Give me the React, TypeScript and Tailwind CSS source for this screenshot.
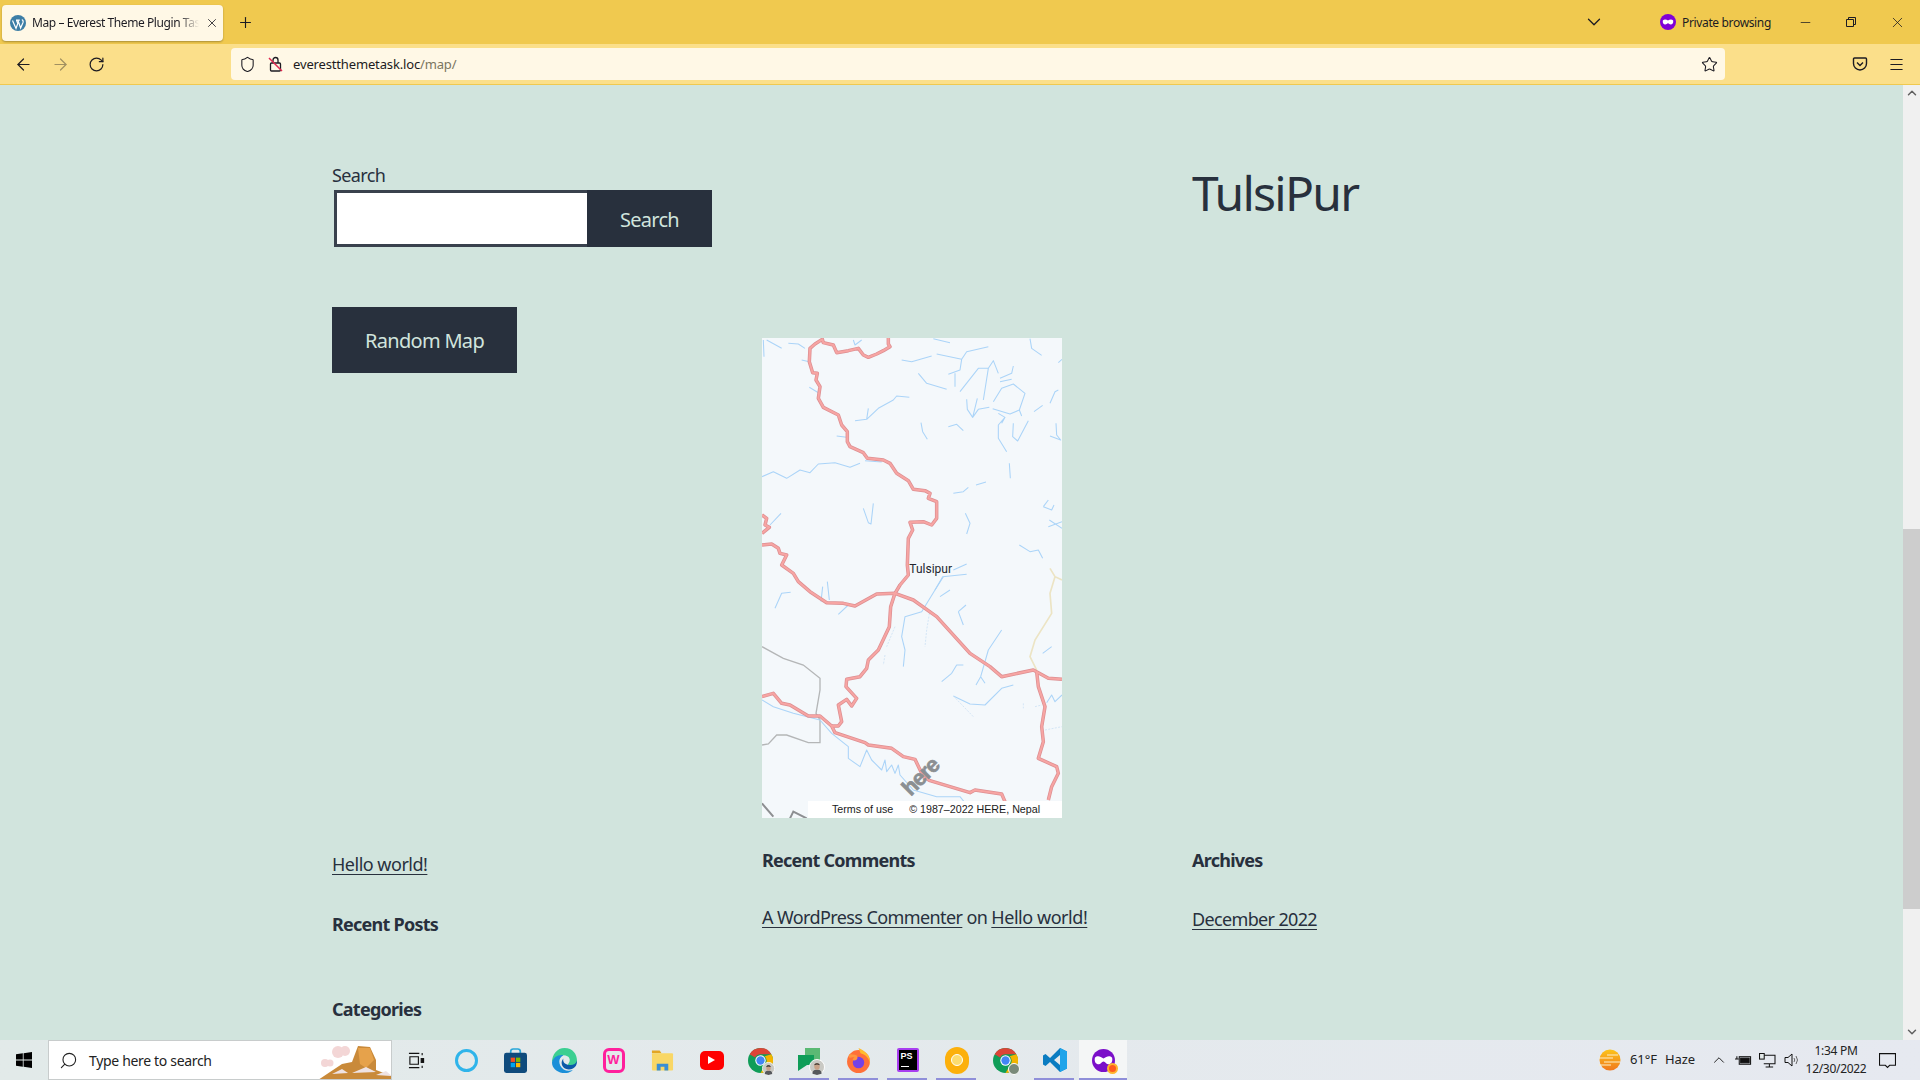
import { ArrowLeft, ArrowRight, ChevronDown, ChevronUp, Menu, Minus, Plus, RotateCw, Search, Shield, Star, X } from 'lucide-react';

const ui = 'font-["Noto_Sans",sans-serif]';

const roads = [
  'M445 24 445 42 450 50 430 62 410 72 385 82 370 75 355 55 325 62 290 68 280 45 250 38 247 28 225 42 210 55 208 95 218 128 232 130 228 150 240 170 235 205 250 232 295 255 305 285 322 305 322 335 330 350 370 368 382 385 430 390 450 400 470 430 505 452 520 478 555 482 570 490 565 505 590 515 590 565 575 585 550 575 510 577 518 600 505 625 502 705 505 735 480 765 465 790 452 830 448 890 415 960 385 990 380 1015 360 1040 320 1048 318 1070 350 1105 335 1128 320 1108 295 1125 305 1175 295 1188 275 1188',
  'M66 645 95 642 115 655 120 670 140 675 125 705 160 730 175 755 210 785 260 818 310 820 345 828 410 792 465 790 520 810 590 860 690 970 750 1010 785 1040 880 1020 925 1045 966 1048',
  'M66 1100 100 1090 125 1120 150 1125 205 1158 240 1158 275 1188 285 1208 375 1238 385 1245 455 1255 490 1280 525 1288 550 1340 570 1352 690 1388 705 1380 785 1392 795 1415',
  'M890 1025 895 1070 915 1130 905 1190 910 1235 895 1285 950 1310 955 1330 935 1370 925 1410',
  'M66 555 80 565 75 585 88 592 66 610',
];

const rivers = [
  'M70 30 72 80M80 30 125 55M145 40 175 42 195 55M340 30 345 45 365 30M580 26 630 38',
  'M485 90 515 95 575 78M590 72 665 88 680 65 745 50M665 88 660 120 625 133M645 130 645 170M535 130 560 160 620 178',
  'M660 185 715 115 745 115 730 210M745 115 760 92 775 130M780 145 815 130 820 108M780 155 815 148M760 215 785 175 820 162 855 190 838 240M680 208 682 238 698 262 712 205M698 262 715 238 748 232M758 236 810 252 838 240 845 258',
  'M870 26 875 55 905 76M955 98 966 88M930 220 945 185 955 180M882 245 908 226M775 250 795 262 775 285 775 325 800 365M795 262 785 280M820 280 818 320 833 333 865 272M948 280 950 315 962 330 930 318',
  'M345 272 380 268 385 235M380 268 415 235 460 210 470 198 508 202M543 278 548 305 562 328M625 290 650 283 670 302M290 318 320 322',
  'M66 440 100 425 140 445 180 420 210 428 235 402 285 398 330 412 360 400M375 392 425 396M808 400 811 445M640 490 670 485 685 472M708 465 738 456',
  'M370 535 385 578 393 582 400 520M676 550 690 580 680 612M910 530 925 510M910 530 935 540 942 525M928 570 966 595M925 590 966 575M838 645 870 665 895 660 908 685',
  'M90 585 123 550M585 780 608 740 680 733M640 720 680 702M208 172 235 188M185 90 208 95',
  'M105 835 125 790 152 787M248 770 243 815M262 755 268 810M295 853 325 825 345 828M610 740 585 780 545 845 495 860 485 920 495 960 490 1010M600 800 630 780M655 845 678 825M655 845 670 885',
  'M745 960 785 900M745 960 722 1040 708 1065M722 1040 735 1060M605 1055 635 1030 650 1005 670 1005M908 970 935 950',
  'M640 1098 690 1122 735 1125 785 1075 820 1065M920 1118 935 1095 945 1115 966 1095',
  'M66 1110 100 1130 160 1150 240 1170 275 1210 325 1250 325 1285 360 1310 380 1260 395 1290 425 1320 435 1290 440 1325 455 1305 465 1330 475 1305 480 1335 520 1380 590 1400 660 1400 680 1425',
];

const faintRivers = 'M465 890 440 950M435 975 430 1005M570 840 560 900 555 950M640 1098 700 1160M850 1120 850 1135M885 1130 905 1125M915 1200 966 1190';

const MapView = () => (
  <div className="relative w-[300px] h-[480px] mt-[253px] bg-[#f4f8fb] overflow-hidden">
    <svg viewBox="66 24 900 1440" className="w-full h-full block">
      <path d="M66 950 130 985 190 1005 240 1045 240 1080 228 1150 240 1170 240 1238 205 1238 140 1215 110 1215 85 1242 66 1245" fill="none" stroke="#b4b6b7" strokeWidth="4" />
      <path d="M66 1420 100 1460M150 1465 160 1445 200 1465" fill="none" stroke="#8d8f92" strokeWidth="6" />
      <path d="M930 715 945 740 966 750M945 740 930 790 935 850 885 930 870 980 890 1020" fill="none" stroke="#ece4c4" strokeWidth="5" />
      {rivers.map((d) => (
        <path key={d} d={d} fill="none" stroke="#abd4f8" strokeWidth="3.2" strokeLinejoin="round" />
      ))}
      <path d={faintRivers} fill="none" stroke="#d4e6f6" strokeWidth="3" strokeDasharray="6 4" />
      {roads.map((d) => (
        <path key={d} d={d} fill="none" stroke="#dd8f92" strokeWidth="10.5" strokeLinejoin="round" />
      ))}
      {roads.map((d) => (
        <path key={d + 'i'} d={d} fill="none" stroke="#f7a5a3" strokeWidth="6" strokeLinejoin="round" />
      ))}
      <text x="508" y="729" fontSize="36" fill="#23262f" fontFamily="Roboto, sans-serif">Tulsipur</text>
      <text x="0" y="0" transform="translate(512 1400) rotate(-45)" fontSize="66" fontWeight="700" fill="#8b8f92" fontFamily="'Liberation Sans', sans-serif" stroke="#8b8f92" strokeWidth="2" letterSpacing="-3">here</text>
    </svg>
    <div className="absolute left-[46px] right-0 bottom-0 h-[17px] bg-white flex items-center pl-[24px] gap-[16px] text-[10.7px] text-[#1a1a1a] font-['Liberation_Sans',sans-serif]">
      <span>Terms of use</span>
      <span>© 1987–2022 HERE, Nepal</span>
    </div>
  </div>
);

const Chrome = () => (
  <div className={`${ui} text-[#1c1b22]`}>
    <div className="h-[44px] bg-[#f0c94f] flex items-center">
      <div className="ml-[2px] mt-[1px] w-[221px] h-[36px] bg-[#fff8e6] rounded-[4px] shadow-[0_1px_2px_rgba(0,0,0,0.3)] flex items-center pl-[8px] pr-[8px] gap-[6px]">
        <svg viewBox="0 0 16 16" className="w-[16px] h-[16px] shrink-0">
          <circle cx="8" cy="8" r="8" fill="#3d7ea6" />
          <path d="M2.5 5.5 6 13.5 7.8 8.5 6.5 5.2M6 5.2H9.8M8 5.4 10.6 13 13 7.5C13.5 6 12.7 4.8 11.8 5" fill="none" stroke="#fff" strokeWidth="1.2" />
        </svg>
        <span className="w-[167px] text-[12px] tracking-[-0.42px] whitespace-nowrap [mask-image:linear-gradient(to_right,black_88%,transparent)]">Map – Everest Theme Plugin Tas</span>
        <X size={14} strokeWidth={1.4} className="shrink-0" />
      </div>
      <Plus size={17} strokeWidth={1.6} className="ml-[14px]" />
      <div className="flex-1" />
      <ChevronDown size={22} strokeWidth={1.4} className="mr-[55px]" />
      <svg viewBox="0 0 16 16" className="w-[16px] h-[16px] mr-[6px]">
        <circle cx="8" cy="8" r="8" fill="#8000d7" />
        <path d="M2.8 6.5C4.5 5 6.5 5.6 8 6.6 9.5 5.6 11.5 5 13.2 6.5 13.6 9 12.3 10.5 10.8 10.5 9.5 10.5 9 9.2 8 9.2S6.5 10.5 5.2 10.5C3.7 10.5 2.4 9 2.8 6.5Z" fill="#fff" />
      </svg>
      <span className="w-[100px] pt-[2px] text-[12px] tracking-[-0.35px] whitespace-nowrap">Private browsing</span>
      <div className="w-[46px] flex justify-center"><Minus size={15} strokeWidth={1.2} /></div>
      <div className="w-[46px] flex justify-center">
        <svg viewBox="0 0 10 10" className="w-[10px] h-[10px]" fill="none" stroke="#1c1b22">
          <path d="M.5 2.5h7v7h-7zM2.5 2.5v-2h7v7h-2" />
        </svg>
      </div>
      <div className="w-[46px] flex justify-center"><X size={17} strokeWidth={1.1} /></div>
    </div>
    <div className="h-[41px] bg-[#fbdf8a] border-b border-[#f0c94f] flex items-start pt-[4px]">
      <div className="w-[231px] h-[32px] flex items-center pl-[14px] gap-[18px]">
        <ArrowLeft size={19} strokeWidth={1.5} />
        <ArrowRight size={19} strokeWidth={1.5} className="opacity-40" />
        <RotateCw size={17} strokeWidth={1.7} />
      </div>
      <div className="w-[1494px] h-[32px] bg-[#fff8e6] rounded-[4px] flex items-center pl-[8px] pr-[7px]">
        <Shield size={17} strokeWidth={1.5} />
        <svg viewBox="0 0 16 16" className="w-[16px] h-[16px] ml-[12px]" fill="none">
          <rect x="2.5" y="7" width="10" height="8" rx="1" stroke="#1c1b22" strokeWidth="1.3" />
          <path d="M5 7V4a2.5 2.5 0 0 1 5 0v3" stroke="#1c1b22" strokeWidth="1.3" />
          <path d="M1 2 14 15" stroke="#e22850" strokeWidth="1.5" />
        </svg>
        <span className="ml-[9px] pt-[2px] text-[13px] tracking-[-0.15px] flex-1">everestthemetask.loc<span className="text-[#7a755f]">/map/</span></span>
        <Star size={17} strokeWidth={1.5} />
      </div>
      <div className="flex-1 h-[32px] flex items-center justify-end pr-[15px] gap-[20px]">
        <svg viewBox="0 0 16 16" className="w-[16px] h-[16px]" fill="none" stroke="#1c1b22" strokeWidth="1.4">
          <path d="M2.5 2h11a1 1 0 0 1 1 1v4.5a6.5 6.5 0 0 1-13 0V3a1 1 0 0 1 1-1Z" />
          <path d="M5 6.5 8 9.5 11 6.5" />
        </svg>
        <Menu size={17} strokeWidth={1.5} />
      </div>
    </div>
  </div>
);

const Page = () => (
  <div className="flex-1 min-w-0 h-[955px] overflow-hidden pl-[332px] text-[#28303d] font-['Noto_Sans',sans-serif]">
    <div className="grid grid-cols-[430px_430px_1fr]">
      <div className="pt-[76px]">
        <label className="block text-[18px] leading-[29px] tracking-[-0.6px]">Search</label>
        <div className="flex ml-[2px] h-[57px]">
          <input className="w-[253px] h-full bg-white border-[3px] border-r-0 border-[#39414d] outline-none" />
          <button className="w-[125px] h-full bg-[#28303d] text-[#d1e4dd] text-[20px] pt-[2px] tracking-[-0.75px]">Search</button>
        </div>
        <button className="mt-[60px] w-[185px] h-[66px] pt-[2px] bg-[#28303d] text-[#d1e4dd] text-[20px] tracking-[-0.7px]">Random Map</button>
      </div>
      <div>
        <MapView />
      </div>
      <h1 className="pt-[72px] text-[48px] leading-[72px] font-normal tracking-[-1.75px]">TulsiPur</h1>
    </div>
    <div className="grid grid-cols-[430px_430px_1fr] mt-[29px] text-[18px] tracking-[-0.6px]">
      <div className="pt-[3px]">
        <a className="underline underline-offset-[3px] leading-[26px] block mt-[1px] tracking-[-0.5px]">Hello world!</a>
        <h2 className="mt-[34px] font-bold leading-[26px] tracking-[-0.75px]">Recent Posts</h2>
        <h2 className="mt-[59px] font-bold leading-[26px] tracking-[-0.75px]">Categories</h2>
      </div>
      <div>
        <h2 className="font-bold leading-[26px] tracking-[-0.75px]">Recent Comments</h2>
        <p className="mt-[31px] leading-[26px]"><a className="underline underline-offset-[3px]">A WordPress Commenter</a> on <a className="underline underline-offset-[3px] tracking-[-0.45px]">Hello world!</a></p>
      </div>
      <div>
        <h2 className="font-bold leading-[26px] tracking-[-0.75px]">Archives</h2>
        <a className="mt-[33px] block underline underline-offset-[3px] leading-[26px] tracking-[-0.65px]">December 2022</a>
      </div>
    </div>
  </div>
);

const Scrollbar = () => (
  <div className="w-[17px] h-[955px] bg-[#f0f0f0] flex flex-col items-center">
    <ChevronUp size={14} strokeWidth={2.5} className="mt-[1px] text-[#606060]" />
    <div className="w-full h-[380px] mt-[429px] bg-[#cdcdcd]" />
    <div className="flex-1" />
    <ChevronDown size={14} strokeWidth={2.5} className="mb-[1px] text-[#606060]" />
  </div>
);

const Slot = ({ children, line, active }: { children: React.ReactNode; line?: boolean; active?: boolean }) => (
  <div className={`relative h-[40px] flex items-center justify-center ${active ? 'w-[48px] bg-[#f4f6f6]' : 'w-[49px]'}`}>
    {children}
    {line && <div className={`absolute bottom-0 h-[2px] bg-[#8f8fd9] ${active ? 'left-0 right-0' : 'left-[4px] right-[5px]'}`} />}
  </div>
);

const ChromeLogo = ({ colors = ['#db4437', '#0f9d58', '#f4b400'] }: { colors?: string[] }) => (
  <svg viewBox="0 0 24 24" className="w-[25px] h-[25px]">
    <circle cx="12" cy="12" r="12" fill={colors[1]} />
    <path d="M12 0A12 12 0 0 1 22.4 6H12A6 6 0 0 0 6.8 9L1.6 6A12 12 0 0 1 12 0Z" fill={colors[0]} />
    <path d="M22.4 6A12 12 0 0 1 12 24L17.2 15A6 6 0 0 0 16 8Z" fill={colors[2]} />
    <circle cx="12" cy="12" r="5" fill="#fff" />
    <circle cx="12" cy="12" r="4" fill="#4285f4" />
  </svg>
);

// tiny profile picture used on the chrome and chat icons
const Avatar = ({ className }: { className: string }) => (
  <svg viewBox="0 0 14 14" className={`absolute ${className}`}>
    <circle cx="7" cy="7" r="6.6" fill="#c9c9c4" stroke="#fff" strokeWidth="0.8" />
    <path d="M3 13C3 10 5 9.5 7 9.5S11 10 11 13L7 14Z" fill="#55585c" />
    <ellipse cx="7" cy="6.5" rx="2.4" ry="3" fill="#c8a288" />
    <path d="M4.6 5.5C4.6 3 9.4 3 9.4 5.5 8 4.6 6 4.6 4.6 5.5Z" fill="#2c2a28" />
  </svg>
);

const Taskbar = () => (
  <div className="h-[40px] bg-linear-to-r from-[#e2eae9] to-[#e6e9f0] flex items-center text-[#222] font-['Noto_Sans',sans-serif]">
    <div className="w-[48px] flex justify-center">
      <svg viewBox="0 0 16 16" className="w-[16px] h-[16px] -ml-[1px]" fill="#000">
        <path d="M0 2.3 6.8 1.3V7.6H0ZM7.6 1.2 16 0V7.6H7.6ZM0 8.4H6.8V14.7L0 13.7ZM7.6 8.4H16V16L7.6 14.8Z" />
      </svg>
    </div>
    <div className="w-[344px] h-[40px] bg-white border border-[#c8cccc] flex items-center pl-[10px] overflow-hidden">
      <Search size={19} strokeWidth={1.4} className="-scale-x-100" />
      <span className="ml-[11px] text-[14px] tracking-[-0.33px] flex-1">Type here to search</span>
      <svg viewBox="0 0 76 40" className="w-[76px] h-[40px] -mr-[1px]">
        <circle cx="22" cy="12" r="6" fill="#f3d6d6" /><circle cx="29" cy="11" r="5" fill="#f3d6d6" />
        <circle cx="9" cy="23" r="4" fill="#f3d6d6" /><circle cx="14" cy="23" r="3.5" fill="#f3d6d6" />
        <path d="M2 40 26 24 36 22 42 6 54 7 60 20 60 30 76 36 76 40Z" fill="#c98a3a" />
        <path d="M42 8 54 8 58 20 50 28 44 24Z" fill="#e6a24b" />
        <path d="M16 34 26 29 32 33ZM36 33 50 27 60 32ZM60 35 70 31 76 36Z" fill="#efe3e3" />
      </svg>
    </div>
    <Slot>
      <svg viewBox="0 0 18 18" className="w-[17px] h-[17px]" fill="none" stroke="#111" strokeWidth="1.2">
        <path d="M1 1.5H12M1 16.5H12M2 5H11V13H2ZM15 1V3.5M15 14.5V17" /><rect x="14" y="7" width="2.5" height="4" fill="#111" />
      </svg>
    </Slot>
    <div className="w-[1px]" />
    <Slot><div className="w-[23px] h-[23px] rounded-full border-[3px] border-[#2fb4ea]" /></Slot>
    <Slot>
      <svg viewBox="0 0 24 26" className="w-[23px] h-[25px]">
        <path d="M7 6V3.5A2.5 2.5 0 0 1 9.5 1h5A2.5 2.5 0 0 1 17 3.5V6" fill="none" stroke="#29a6d9" strokeWidth="1.8" />
        <rect y="5" width="24" height="21" rx="2.5" fill="#0f4b7d" />
        <rect x="7" y="10" width="4.5" height="4.5" fill="#f25022" /><rect x="12.5" y="10" width="4.5" height="4.5" fill="#7fba00" />
        <rect x="7" y="15.5" width="4.5" height="4.5" fill="#00a4ef" /><rect x="12.5" y="15.5" width="4.5" height="4.5" fill="#ffb900" />
      </svg>
    </Slot>
    <Slot>
      <svg viewBox="0 0 24 24" className="w-[25px] h-[25px]">
        <path d="M12 0C20 0 24 6 24 12 24 16 20 18 15 16 19 12 17 7 11 7 5 7 1 12 0 14 0 6 5 0 12 0Z" fill="#3ccf91" />
        <path d="M0 14C1 9 6 6 11 7 7 9 6 13 8 17 10 21 15 23 20 21 17 24 13 24.5 10 24 4 23 0 19 0 14Z" fill="#1b8fd8" />
        <path d="M11 10C8 13 9 18 13 20 17 21.5 21 20 23 17 24 15 24 14 24 12 23 16 19 17 15 16 12 15 10 13 11 10Z" fill="#0c5aa8" />
      </svg>
    </Slot>
    <Slot>
      <div className="w-[22px] h-[25px] rounded-[6px] border-[3px] border-[#ff1f9c] flex items-center justify-center text-[#ff1f9c] text-[13px] font-bold font-['Liberation_Sans',sans-serif]">W</div>
    </Slot>
    <Slot>
      <svg viewBox="0 0 24 22" className="w-[23px] h-[22px]">
        <path d="M1 1H9L11 4H1Z" fill="#e3a624" /><rect x="1" y="4" width="22" height="18" rx="1" fill="#f9d766" />
        <path d="M6 22V15H18V22H14V18H10V22Z" fill="#3b8fd4" />
      </svg>
    </Slot>
    <Slot>
      <div className="w-[24px] h-[19px] rounded-[5px] bg-[#f00] flex items-center justify-center">
        <div className="w-0 h-0 border-y-[4px] border-y-transparent border-l-[7px] border-l-white" />
      </div>
    </Slot>
    <Slot>
      <div className="relative">
        <ChromeLogo />
        <Avatar className="-right-[2px] -bottom-[2px] w-[13px] h-[13px]" />
      </div>
    </Slot>
    <Slot line>
      <div className="relative w-[25px] h-[26px]">
        <svg viewBox="0 0 24 26" className="w-[24px] h-[26px]">
          <path d="M8 1H23V14H17V18H10L1 24V8H8Z" fill="#0f9d58" /><path d="M8 1H23V14H17V8H8Z" fill="#5bb974" />
        </svg>
        <Avatar className="-right-[3px] -bottom-[2px] w-[16px] h-[16px]" />
      </div>
    </Slot>
    <Slot line>
      <svg viewBox="0 0 24 24" className="w-[25px] h-[25px]">
        <circle cx="12" cy="13" r="11" fill="#ff7139" />
        <path d="M12 0C19 3 24 8 23 15 22 8 17 6 14 5Z" fill="#ffbd2e" />
        <circle cx="12" cy="14" r="5.5" fill="#7542e5" />
        <path d="M3 6C2 12 5 8 8 9 6 10 6 12 8 12 11 12 12 9 10 7 8 6 5 6 3 6Z" fill="#ff9640" />
      </svg>
    </Slot>
    <Slot line>
      <div className="relative w-[22px] h-[24px] bg-black border-[2px] border-[#a83ef0] rounded-[2px] text-white text-[9px] font-bold pl-[2px] leading-[13px] font-['Liberation_Sans',sans-serif]">
        PS
        <div className="absolute left-[2px] bottom-[3px] w-[8px] h-[1.5px] bg-white" />
      </div>
    </Slot>
    <Slot line>
      <div className="w-[24px] h-[27px] rounded-full bg-[#fcb00c] flex items-center justify-center">
        <div className="w-[12px] h-[12px] rounded-full bg-[#fcdc70] border-[1.5px] border-white" />
      </div>
    </Slot>
    <Slot>
      <div className="relative">
        <ChromeLogo />
        <div className="absolute -right-[2px] -bottom-[2px] w-[12px] h-[12px] rounded-full bg-[#7a8a7a] border border-white" />
      </div>
    </Slot>
    <Slot line>
      <svg viewBox="0 0 24 24" className="w-[24px] h-[24px]">
        <path d="M17 0 24 3.5V20.5L17 24 7 14 2.5 18 0 16.5V7.5L2.5 6 7 10ZM17 7 11 12 17 17Z" fill="#0a7cc1" />
        <path d="M17 0 24 3.5V20.5L17 24Z" fill="#1fa4ea" />
      </svg>
    </Slot>
    <Slot line active>
      <div className="relative">
        <svg viewBox="0 0 24 24" className="w-[23px] h-[23px]">
          <circle cx="12" cy="12" r="12" fill="#7b10c9" />
          <path d="M3 9C6 6 9 8 12 10 15 8 18 6 21 9 22 14 19 16 17 16 15 16 14 13 12 13S9 16 7 16C5 16 2 14 3 9Z" fill="#fff" />
        </svg>
        <div className="absolute -right-[3px] -bottom-[2px] w-[11px] h-[11px] rounded-full bg-[#ff5a1f] border-[2px] border-[#ffb52e]" />
      </div>
    </Slot>
    <div className="flex-1" />
    <svg viewBox="0 0 22 22" className="w-[22px] h-[22px] mr-[9px]">
      <defs>
        <linearGradient id="sun" x1="0" x2="0" y1="0" y2="1"><stop offset="0" stopColor="#fcc419" /><stop offset="1" stopColor="#f0781e" /></linearGradient>
      </defs>
      <circle cx="11" cy="11" r="10.5" fill="url(#sun)" />
      <path d="M0 9H14M8 6H19M5 13H21M0 16H12" stroke="#fdf0c8" strokeWidth="1.2" />
    </svg>
    <span className="text-[13px] tracking-[-0.1px] w-[35px]">61°F</span>
    <span className="text-[13px] tracking-[-0.1px] w-[45px]">Haze</span>
    <ChevronUp size={18} strokeWidth={1.3} />
    <svg viewBox="0 0 18 12" className="w-[17px] h-[12px] ml-[7px]" fill="none" stroke="#111" strokeWidth="1.1">
      <rect x="4.5" y="2.5" width="12" height="8" /><rect x="6" y="4" width="9" height="5" fill="#111" /><path d="M0 5H4M2 2V5" />
    </svg>
    <svg viewBox="0 0 18 16" className="w-[17px] h-[15px] ml-[7px]" fill="none" stroke="#111" strokeWidth="1.1">
      <path d="M5 2.5H17V11.5H5M11 11.5V15M7 15H15" /><rect x="0.5" y="0.5" width="5" height="6" fill="#e4eaea" />
    </svg>
    <svg viewBox="0 0 16 14" className="w-[16px] h-[14px] ml-[8px]" fill="none" stroke="#111" strokeWidth="1">
      <path d="M1 4.5H4L8 1V13L4 9.5H1Z" /><path d="M10 5Q11.5 7 10 9M12 3Q15 7 12 11" stroke="#666" />
    </svg>
    <div className="w-[72px] text-center text-[12px] leading-[18px] tracking-[-0.3px]">
      <div>1:34 PM</div>
      <div>12/30/2022</div>
    </div>
    <div className="w-[34px] pl-[7px] mr-[14px]">
      <svg viewBox="0 0 16 16" className="w-[17px] h-[17px]" fill="none" stroke="#111">
        <path d="M.5 1.5H15.5V12.5H10L8 14.5 6 12.5H.5Z" />
      </svg>
    </div>
  </div>
);

export default function App() {
  return (
    <div className="w-[1920px] h-[1080px] overflow-hidden bg-[#d1e4dd]">
      <Chrome />
      <div className="flex">
        <Page />
        <Scrollbar />
      </div>
      <Taskbar />
    </div>
  );
}
